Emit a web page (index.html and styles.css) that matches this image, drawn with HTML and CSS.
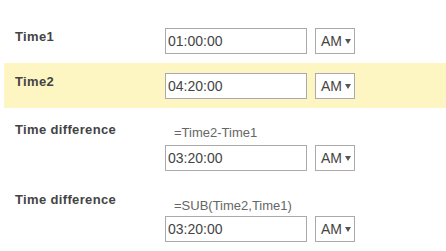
FILE: index.html
```html
<!DOCTYPE html>
<html>
<head>
<meta charset="utf-8">
<link rel="stylesheet" href="styles.css">
</head>
<body>
<div class="form">
  <div class="row">
    <div class="label">Time1</div>
    <div class="field">
      <div class="controls">
        <input class="time" value="01:00:00">
        <div class="ampm">AM<span class="caret"></span></div>
      </div>
    </div>
  </div>
  <div class="row highlight">
    <div class="label">Time2</div>
    <div class="field">
      <div class="controls">
        <input class="time" value="04:20:00">
        <div class="ampm">AM<span class="caret"></span></div>
      </div>
    </div>
  </div>
  <div class="row calc">
    <div class="label">Time difference</div>
    <div class="field">
      <div class="formula">=Time2-Time1</div>
      <div class="controls">
        <input class="time" value="03:20:00">
        <div class="ampm">AM<span class="caret"></span></div>
      </div>
    </div>
  </div>
  <div class="row calc calc-2">
    <div class="label">Time difference</div>
    <div class="field">
      <div class="formula">=SUB(Time2,Time1)</div>
      <div class="controls">
        <input class="time" value="03:20:00">
        <div class="ampm">AM<span class="caret"></span></div>
      </div>
    </div>
  </div>
</div>
</body>
</html>
```

FILE: styles.css
```css
html, body {
  margin: 0;
  padding: 0;
  background: #ffffff;
}
body {
  font-family: "Liberation Sans", Arial, sans-serif;
  width: 446px;
  height: 251px;
  overflow: hidden;
}
.form {
  margin-left: 4px;
  padding-top: 18px;
}
.row {
  display: flex;
  align-items: flex-start;
  padding: 10px 0 9px 11px;
}
.highlight {
  background: #fdf6c3;
}
.label {
  width: 150px;
  flex: none;
  font-size: 13px;
  line-height: 15px;
  font-weight: bold;
  letter-spacing: 0.35px;
  color: #444444;
  margin-top: 1px;
}
.field {
  display: flex;
  flex-direction: column;
}
.controls {
  display: flex;
  align-items: center;
  gap: 8px;
}
.time {
  box-sizing: border-box;
  width: 142px;
  height: 26px;
  margin: 0;
  border: 1px solid #aaaaaa;
  padding: 0 2px;
  font-family: "Liberation Sans", Arial, sans-serif;
  font-size: 14px;
  color: #444444;
  background: #ffffff;
  outline: none;
}
.ampm {
  box-sizing: border-box;
  width: 40px;
  height: 26px;
  border: 1px solid #aaaaaa;
  background: #ffffff;
  display: flex;
  align-items: center;
  padding-left: 5px;
  font-size: 14px;
  color: #444444;
}
.caret {
  width: 0;
  height: 0;
  margin-left: 3px;
  border-left: 3px solid transparent;
  border-right: 3px solid transparent;
  border-top: 5px solid #555555;
}
.calc {
  padding-top: 14px;
  padding-bottom: 7px;
}
.calc .label {
  margin-top: 0;
}
.formula {
  font-size: 13px;
  line-height: 15px;
  color: #666666;
  padding-left: 9px;
  margin-top: 3px;
  margin-bottom: 5px;
}
.calc-2 .formula {
  margin-top: 6px;
  margin-bottom: 3px;
}
```
